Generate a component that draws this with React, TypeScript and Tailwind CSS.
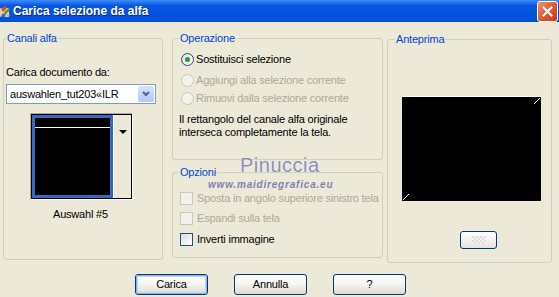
const sans = "font-['Liberation_Sans',Arial,sans-serif]";

function Radio({ label, checked, disabled }: { label: string; checked?: boolean; disabled?: boolean }) {
  return (
    <div className="flex h-[13px] items-center whitespace-nowrap">
      <span
        className={
          disabled
            ? "flex h-[13px] w-[13px] items-center justify-center rounded-full border border-[#cac8bb] bg-[#f3f2ea]"
            : "flex h-[13px] w-[13px] items-center justify-center rounded-full border border-[#1c5180] bg-linear-to-br from-[#dcdcd5] to-white"
        }
      >
        {checked && <span className="h-[5px] w-[5px] rounded-full bg-[#21a121]" />}
      </span>
      <span className={disabled ? "ml-[2px] leading-[13px] text-[#aca899]" : "ml-[2px] leading-[13px] text-black"}>
        {label}
      </span>
    </div>
  );
}

function Check({ label, disabled }: { label: string; disabled?: boolean }) {
  return (
    <div className="flex h-[13px] items-center whitespace-nowrap">
      <span
        className={
          disabled
            ? "h-[13px] w-[13px] shrink-0 border border-[#cac8bb] bg-[#f3f2ea]"
            : "h-[13px] w-[13px] shrink-0 border border-[#1c5180] bg-linear-to-br from-[#dcdcd5] to-white"
        }
      />
      <span className={disabled ? "ml-[4px] leading-[13px] text-[#aca899]" : "ml-[4px] leading-[13px] text-black"}>
        {label}
      </span>
    </div>
  );
}

function XpButton({ label, isDefault }: { label: string; isDefault?: boolean }) {
  return (
    <div className="flex h-[21px] w-[73px] items-center justify-center rounded-[3px] border border-[#003c74] bg-linear-to-b from-white via-[#f5f4ee] to-[#dcdad0]">
      <div
        className={
          isDefault
            ? "flex h-full w-full items-center justify-center rounded-[2px] border border-[#8ab0ee] shadow-[inset_0_0_0_1px_#c0d4f5]"
            : "flex h-full w-full items-center justify-center"
        }
      >
        {label}
      </div>
    </div>
  );
}

export default function App() {
  return (
    <div className={`relative h-[297px] w-[559px] overflow-hidden bg-[#ece9d8] text-[11px] tracking-[-0.2px] text-black ${sans}`}>
      {/* title bar */}
      <div className="relative flex h-[22px] items-center bg-linear-to-b from-[#3d8ef5] via-[#0856e4] via-25% to-[#0050d8]">
        <svg width="12" height="14" viewBox="0 0 12 14" className="mt-[1px]">
          <rect x="0" y="3" width="9" height="9" rx="1" fill="#e8d0a0" />
          <path d="M1 4 L5 1 L7 3 L3 7 Z" fill="#e24a2a" />
          <path d="M4 7 L9 3 L10 5 L6 9 Z" fill="#3aa23a" />
          <path d="M2 9 L6 8 L5 12 L1 12 Z" fill="#2d6bd8" />
          <circle cx="8" cy="10" r="1.6" fill="#f2c522" />
        </svg>
        <span className="ml-[1px] text-[12px] font-bold tracking-normal text-white [text-shadow:1px_1px_0_#0a2a8a]">
          Carica selezione da alfa
        </span>
        <div className="absolute right-[1px] top-[1px] flex h-[21px] w-[21px] items-center justify-center rounded-[3px] border border-white bg-linear-to-br from-[#f0906a] via-[#e25a32] to-[#c53a16]">
          <svg width="11" height="11" viewBox="0 0 11 11">
            <path d="M1.5 1.5 L9.5 9.5 M9.5 1.5 L1.5 9.5" stroke="white" strokeWidth="2" strokeLinecap="square" />
          </svg>
        </div>
      </div>

      {/* main row */}
      <div className="flex items-start pl-[3px] pt-[10px]">
        {/* Canali alfa */}
        <fieldset className="h-[228px] w-[160px] rounded-[3px] border border-[#d0d0bf]">
          <legend className="ml-[2px] px-[1px] leading-[13px] text-[#0046d5]">Canali alfa</legend>
          <div className="ml-[2px] mt-[21px] leading-[13px]">Carica documento da:</div>
          <div className="ml-[2px] mt-[5px] flex h-[20px] w-[150px] items-center border border-[#7f9db9] bg-white">
            <span className="ml-[3px] flex-1">auswahlen_tut203«ILR</span>
            <span className="mr-[1px] flex h-[16px] w-[16px] items-center justify-center rounded-[2px] bg-linear-to-b from-[#d8e4fc] to-[#b4c8f5]">
              <svg width="8" height="6" viewBox="0 0 8 6">
                <path d="M1 1 L4 4 L7 1" stroke="#4d6185" strokeWidth="2" fill="none" />
              </svg>
            </span>
          </div>
          <div className="ml-[26px] mt-[9px] w-[103px] border border-t-[#aca899] border-l-[#aca899] border-b-white border-r-white">
            <div className="flex h-[85px] border border-black">
              <div className="h-full w-[81px] border-[3px] border-[#316ac5] bg-black pt-[9px]">
                <div className="h-px bg-white" />
              </div>
              <div className="flex flex-1 justify-center border-l border-white bg-[#ece9d8] pt-[15px]">
                <svg width="8" height="5" viewBox="0 0 8 5">
                  <path d="M0 0 L8 0 L4 4 Z" fill="black" />
                </svg>
              </div>
            </div>
          </div>
          <div className="ml-[49px] mt-[8px] leading-[13px]">Auswahl #5</div>
        </fieldset>

        {/* middle column */}
        <div className="ml-[9px] flex w-[211px] flex-col">
          <fieldset className="h-[128px] rounded-[3px] border border-[#d0d0bf]">
            <legend className="ml-[6px] px-[1px] leading-[13px] text-[#0046d5]">Operazione</legend>
            <div className="ml-[8px] mt-[8px] flex flex-col">
              <Radio label="Sostituisci selezione" checked />
              <div className="mt-[8px]">
                <Radio label="Aggiungi alla selezione corrente" disabled />
              </div>
              <div className="mt-[5px]">
                <Radio label="Rimuovi dalla selezione corrente" disabled />
              </div>
            </div>
            <div className="ml-[6px] mt-[8px] leading-[13px]">
              Il rettangolo del canale alfa originale
              <br />
              interseca completamente la tela.
            </div>
          </fieldset>

          <fieldset className="mt-[6px] h-[92px] rounded-[3px] border border-[#d0d0bf]">
            <legend className="ml-[6px] px-[1px] leading-[13px] text-[#0046d5]">Opzioni</legend>
            <div className="ml-[7px] mt-[13px] flex flex-col">
              <Check label="Sposta in angolo superiore sinistro tela" disabled />
              <div className="mt-[7px]">
                <Check label="Espandi sulla tela" disabled />
              </div>
              <div className="mt-[8px]">
                <Check label="Inverti immagine" />
              </div>
            </div>
          </fieldset>
        </div>

        {/* Anteprima */}
        <fieldset className="ml-[4px] mt-[1px] h-[230px] w-[165px] rounded-[3px] border border-[#d0d0bf]">
          <legend className="ml-[7px] px-[1px] leading-[13px] text-[#0046d5]">Anteprima</legend>
          <div className="ml-[14px] mt-[50px] h-[105px] w-[139px] border-t border-white bg-black">
            <svg width="139" height="104" viewBox="0 0 139 104">
              <path d="M132 7 L138 1" stroke="white" strokeWidth="1" />
              <path d="M1 103 L7 97" stroke="white" strokeWidth="1" />
            </svg>
          </div>
          <div className="ml-[72px] mt-[30px] flex h-[18px] w-[37px] items-center justify-center rounded-[3px] border border-[#003c74] bg-linear-to-b from-white to-[#e6e4dc]">
            <div className="h-[8px] w-[14px] bg-[repeating-conic-gradient(#f4f4f4_0_25%,#dcdcdc_0_50%)] bg-[length:4px_4px]" />
          </div>
        </fieldset>
      </div>

      {/* buttons */}
      <div className="ml-[135px] mt-[11px] flex gap-[26px]">
        <XpButton label="Carica" isDefault />
        <XpButton label="Annulla" />
        <XpButton label="?" />
      </div>

      {/* watermark */}
      <div className="pointer-events-none absolute left-[240px] top-[153px] font-['Liberation_Sans',sans-serif] text-[20px] leading-[24px] tracking-[0.5px] text-[#8a90ba] [text-shadow:0_0_1px_#ffffff]">
        Pinuccia
      </div>
      <div className="pointer-events-none absolute left-[208px] top-[179px] font-['Liberation_Sans',sans-serif] text-[10px] font-semibold italic leading-[12px] tracking-[0.8px] text-[#7e84ae]">
        www.maidiregrafica.eu
      </div>
    </div>
  );
}
